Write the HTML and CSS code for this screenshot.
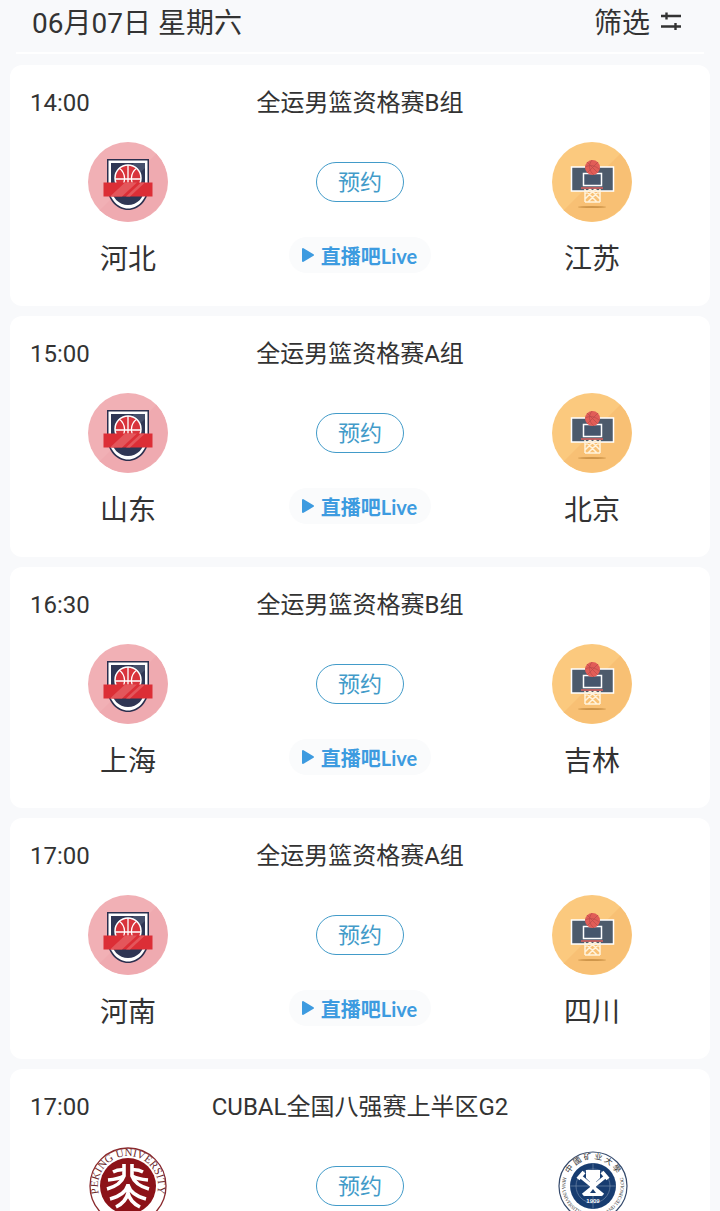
FILE: index.html
```html
<!DOCTYPE html>
<html lang="zh-CN">
<head>
    <meta charset="UTF-8">
    <meta name="viewport" content="width=device-width, initial-scale=1.0">
    <title>赛程</title>
    <link rel="stylesheet" href="styles.css">
</head>
<body>
    <!-- Shared logos -->
    <svg class="sprite" aria-hidden="true">
        <symbol id="logo-home" viewBox="0 0 80 80">
            <circle cx="40" cy="40" r="40" fill="#f1b0b5"/>
            <path d="M68.280 11.720A40 40 0 0 1 11.720 68.280Z" fill="#efaab0"/>
            <path d="M19 17H61V43C61 58 51 68 40 68S19 58 19 43Z" fill="#2b2f4e"/>
            <path d="M20.500 18.500H59.500V43C59.500 57 50 66.500 40 66.500S20.500 57 20.500 43Z" fill="#fff"/>
            <path d="M23 21H57V43C57 56 49 63 40 63S23 56 23 43Z" fill="#2f3654"/>
            <path d="M46 21H57V26L36 46H23V43Z" fill="#46506c"/>
            <circle cx="40" cy="36" r="13" fill="#d8343c" stroke="#fff" stroke-width="1.500"/>
            <path d="M40 23V49M27 37H53M31 26C38 31 38 40 33 46M49 26C42 31 42 40 47 46" fill="none" stroke="#fff" stroke-width="1.300"/>
            <rect x="15.500" y="40.500" width="49" height="14" fill="#dc2e36"/>
            <path d="M37 40.500H49L34 54.500H22ZM53 40.500H57L42 54.500H38Z" fill="#e4565b"/>
        </symbol>
        <symbol id="logo-away" viewBox="0 0 80 80">
            <circle cx="40" cy="40" r="40" fill="#fbc97e"/>
            <path d="M68.280 11.720A40 40 0 0 1 11.720 68.280Z" fill="#f8c074"/>
            <rect x="19.500" y="25" width="42" height="24" fill="#4d5b6c" stroke="#fff" stroke-width="1.500"/>
            <rect x="31.500" y="31.500" width="18" height="12" fill="#46566c" stroke="#fff" stroke-width="1.500"/>
            <circle cx="40.500" cy="25.500" r="7.500" fill="#e15d57"/>
            <path d="M35 20L46 31M46 20L35 31M40 18C36 23 37 29 42 33M33 25C39 22 44 24 48 28" fill="none" stroke="#b94a4a" stroke-width="0.700"/>
            <path d="M33 47V60M48 47V60M33 48L45 60M38 47L48 57M43 47L48 52M48 48L36 60M43 47L33 57M38 47L33 52M33 60H48" fill="none" stroke="#fff3dc" stroke-width="1.500"/>
            <path d="M29 46H51" stroke="#dc5f5c" stroke-width="1.500"/>
            <ellipse cx="40" cy="65" rx="14" ry="1" fill="#cf964b"/>
        </symbol>
    </svg>

    <header class="date-bar">
        <h1>06月07日 星期六</h1>
        <button type="button" class="filter">
            筛选
            <svg width="22" height="22" viewBox="0 0 22 22" fill="none" stroke="#333" stroke-width="2.400">
                <path d="M1 5H21M6.500 1.500V8.500M1 15.500H21M15.500 12V19"/>
            </svg>
        </button>
    </header>

    <main class="match-list">
        <article class="match">
            <div class="match-head">
                <time>14:00</time>
                <h2>全运男篮资格赛B组</h2>
            </div>
            <div class="match-body">
                <div class="team">
                    <svg class="logo"><use href="#logo-home"/></svg>
                    <span>河北</span>
                </div>
                <div class="actions">
                    <button type="button" class="reserve">预约</button>
                    <a href="#" class="live"><svg width="14" height="16" viewBox="0 0 14 16"><path d="M2 2V14L12 8Z"/></svg>直播吧Live</a>
                </div>
                <div class="team">
                    <svg class="logo"><use href="#logo-away"/></svg>
                    <span>江苏</span>
                </div>
            </div>
        </article>

        <article class="match">
            <div class="match-head">
                <time>15:00</time>
                <h2>全运男篮资格赛A组</h2>
            </div>
            <div class="match-body">
                <div class="team">
                    <svg class="logo"><use href="#logo-home"/></svg>
                    <span>山东</span>
                </div>
                <div class="actions">
                    <button type="button" class="reserve">预约</button>
                    <a href="#" class="live"><svg width="14" height="16" viewBox="0 0 14 16"><path d="M2 2V14L12 8Z"/></svg>直播吧Live</a>
                </div>
                <div class="team">
                    <svg class="logo"><use href="#logo-away"/></svg>
                    <span>北京</span>
                </div>
            </div>
        </article>

        <article class="match">
            <div class="match-head">
                <time>16:30</time>
                <h2>全运男篮资格赛B组</h2>
            </div>
            <div class="match-body">
                <div class="team">
                    <svg class="logo"><use href="#logo-home"/></svg>
                    <span>上海</span>
                </div>
                <div class="actions">
                    <button type="button" class="reserve">预约</button>
                    <a href="#" class="live"><svg width="14" height="16" viewBox="0 0 14 16"><path d="M2 2V14L12 8Z"/></svg>直播吧Live</a>
                </div>
                <div class="team">
                    <svg class="logo"><use href="#logo-away"/></svg>
                    <span>吉林</span>
                </div>
            </div>
        </article>

        <article class="match">
            <div class="match-head">
                <time>17:00</time>
                <h2>全运男篮资格赛A组</h2>
            </div>
            <div class="match-body">
                <div class="team">
                    <svg class="logo"><use href="#logo-home"/></svg>
                    <span>河南</span>
                </div>
                <div class="actions">
                    <button type="button" class="reserve">预约</button>
                    <a href="#" class="live"><svg width="14" height="16" viewBox="0 0 14 16"><path d="M2 2V14L12 8Z"/></svg>直播吧Live</a>
                </div>
                <div class="team">
                    <svg class="logo"><use href="#logo-away"/></svg>
                    <span>四川</span>
                </div>
            </div>
        </article>

        <article class="match">
            <div class="match-head">
                <time>17:00</time>
                <h2>CUBAL全国八强赛上半区G2</h2>
            </div>
            <div class="match-body">
                <div class="team">
                    <svg class="logo" viewBox="0 4 80 80">
                        <circle cx="40" cy="44" r="38" fill="#fff" stroke="#8a2a2e" stroke-width="1.300"/>
                        <circle cx="40" cy="44" r="28" fill="#8c1218"/>
                        <path id="pku-ring" d="M14 59A30 30 0 1 1 66 59" fill="none"/>
                        <text class="ring-text pku"><textPath href="#pku-ring" startOffset="50%">PEKING UNIVERSITY</textPath></text>
                        <g fill="none" stroke="#fff" stroke-width="3.600">
                            <path d="M36 22V34Q33 43 19 47M44 22V34Q47 43 61 47M36 28Q31 27 25 30M44 28Q49 27 55 30M36 34Q31 37 20 38M44 34Q49 37 60 38"/>
                            <path d="M40 42V56M40 43Q37 53 22 57M40 43Q43 53 58 57M40 51Q38 60 28 65M40 51Q42 60 52 65"/>
                        </g>
                    </svg>
                </div>
                <div class="actions">
                    <button type="button" class="reserve">预约</button>
                </div>
                <div class="team">
                    <svg class="logo" viewBox="0 3 80 80">
                        <circle cx="41" cy="43" r="34" fill="#fff" stroke="#354a6c" stroke-width="1.200"/>
                        <circle cx="41" cy="43" r="23" fill="#173c70"/>
                        <path id="cumt-top" d="M16 35A26 26 0 0 1 66 35" fill="none"/>
                        <text class="ring-text cumt"><textPath href="#cumt-top" startOffset="50%">中 國 矿 业 大 學</textPath></text>
                        <path id="cumt-bottom" d="M11 35A31 31 0 1 0 71 35" fill="none"/>
                        <text class="ring-text cumt-en"><textPath href="#cumt-bottom" startOffset="50%">CHINA UNIVERSITY OF MINING AND TECHNOLOGY</textPath></text>
                        <circle cx="41" cy="43" r="17" fill="none" stroke="#6f87a8" stroke-width="0.700"/>
                        <path d="M18 43H64M41 20V66" stroke="#6f87a8" stroke-width="0.700"/>
                        <path d="M29 34L51 52M53 34L31 52" stroke="#fff" stroke-width="3.500"/>
                        <path d="M26 36L32 29M56 36L50 29" stroke="#fff" stroke-width="4"/>
                        <path d="M34 27H48V35L44 39V46L50 53H32L38 46V39L34 35Z" fill="#fff"/>
                        <path d="M41 46L44 50H38Z" fill="#173c70"/>
                        <text x="41" y="60" class="ring-text year">1909</text>
                    </svg>
                </div>
            </div>
        </article>
    </main>
</body>
</html>
```
FILE: styles.css
```css
:root {
    --background: #f8f9fb;
    --text: #333;
    --blue: #429bc9;
    --live: #3d9be0;
}

* {
    margin: 0;
    padding: 0;
    box-sizing: border-box;
}

body {
    height: 100vh;
    overflow: hidden;
    background: var(--background);
    color: var(--text);
    font-family: Roboto, "Noto Sans CJK SC", sans-serif;
}

button {
    border: none;
    background: none;
    color: inherit;
    font-family: inherit;
    cursor: pointer;
}

.sprite {
    display: none;
}

.date-bar {
    display: flex;
    justify-content: space-between;
    margin: 0 16px 11px;
    padding: 4px 22px 8px 16px;
    border-bottom: 2px solid white;
}

.date-bar h1,
.filter {
    font-size: 28px;
    font-weight: 400;
    line-height: 40px;
}

.filter {
    display: flex;
    align-items: center;
    gap: 10px;
}

.filter svg {
    margin-bottom: 4px;
}

.match-list {
    display: flex;
    flex-direction: column;
    gap: 10px;
    padding: 0 10px;
}

.match {
    flex-shrink: 0;
    height: 241px;
    padding-top: 20px;
    border-radius: 12px;
    background: white;
}

.match-head {
    display: grid;
    grid-template-columns: 1fr auto 1fr;
    align-items: center;
    padding: 0 20px;
    font-size: 24px;
    line-height: 36px;
}

.match-head h2 {
    font-size: 24px;
    font-weight: 400;
}

.match-body {
    display: grid;
    grid-template-columns: 1fr 228px 1fr;
    margin-top: 21px;
}

.team {
    display: flex;
    flex-direction: column;
    align-items: center;
    gap: 18px;
    font-size: 28px;
    line-height: 40px;
}

.logo {
    width: 80px;
    height: 80px;
}

.actions {
    display: flex;
    flex-direction: column;
    align-items: center;
    gap: 35px;
    padding-top: 20px;
}

.reserve {
    width: 88px;
    height: 40px;
    padding-top: 2px;
    border: 1px solid var(--blue);
    border-radius: 20px;
    color: var(--blue);
    font-size: 22px;
    line-height: 36px;
}

.live {
    display: flex;
    align-items: center;
    gap: 6px;
    height: 36px;
    padding: 0 14px 0 12px;
    border-radius: 18px;
    background: #fafbfc;
    color: var(--live);
    font-family: Lato, "Noto Sans CJK SC", sans-serif;
    font-size: 20px;
    font-weight: 700;
    text-decoration: none;
}

.live path {
    fill: var(--live);
    stroke: var(--live);
    stroke-width: 2px;
    stroke-linejoin: round;
}

.ring-text {
    font-family: "Liberation Serif", "Noto Sans CJK SC", serif;
    text-anchor: middle;
}

.pku {
    fill: #6d2a2c;
    font-size: 11px;
}

.cumt {
    fill: #333;
    font-size: 8px;
}

.cumt-en {
    fill: #333;
    font-size: 5px;
}

.year {
    fill: white;
    font-family: "Liberation Sans", sans-serif;
    font-size: 6px;
    font-weight: 700;
}
```
